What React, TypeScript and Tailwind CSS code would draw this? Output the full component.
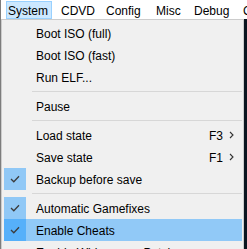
import React from 'react';

type Item =
    | { kind: 'sep' }
    | { kind: 'item'; label: string; shortcut?: string; sub?: boolean; checked?: boolean; hover?: boolean };

const items: Item[] = [
    { kind: 'item', label: 'Boot ISO (full)' },
    { kind: 'item', label: 'Boot ISO (fast)' },
    { kind: 'item', label: 'Run ELF...' },
    { kind: 'sep' },
    { kind: 'item', label: 'Pause' },
    { kind: 'sep' },
    { kind: 'item', label: 'Load state', shortcut: 'F3', sub: true },
    { kind: 'item', label: 'Save state', shortcut: 'F1', sub: true },
    { kind: 'item', label: 'Backup before save', checked: true },
    { kind: 'sep' },
    { kind: 'item', label: 'Automatic Gamefixes', checked: true },
    { kind: 'item', label: 'Enable Cheats', checked: true, hover: true },
    { kind: 'item', label: 'Enable Widescreen Patches' },
];

const menus = [
    { label: 'System', w: 'w-[53px]' },
    { label: 'CDVD', w: 'w-[45px]' },
    { label: 'Config', w: 'w-[50px]' },
    { label: 'Misc', w: 'w-[38px]' },
    { label: 'Debug', w: 'w-[49px]' },
    { label: 'Capture', w: 'w-[60px]' },
];

const Check = () => (
    <svg width="10" height="8" viewBox="0 0 10 8" fill="none">
        <path d="M1 4 L3.8 6.8 L9 1.2" stroke="#3c3c3c" strokeWidth="1.3" />
    </svg>
);

const Chevron = () => (
    <svg width="5" height="8" viewBox="0 0 5 8" fill="none">
        <path d="M1 1 L4 4 L1 7" stroke="#333" strokeWidth="1.1" />
    </svg>
);

export default function App() {
    return (
        <div className="w-[247px] h-[249px] overflow-hidden flex bg-[#0b1520] font-['Segoe_UI','Liberation_Sans',sans-serif] text-[12px] text-black">
            <div className="w-px shrink-0 bg-[#7d7d7d]" />
            <div className="flex-1 flex flex-col min-w-0">
                {/* menu bar */}
                <div className="h-[19px] shrink-0 bg-white flex pl-[5px] overflow-hidden">
                    {menus.map((m, i) => (
                        <div key={m.label} className={`${m.w} shrink-0 h-[19px] flex`}>
                            {i === 0 ? (
                                <div className="mt-[1px] w-[46px] h-[18px] bg-[#cce8ff] border border-[#99d1ff] flex items-center pl-[1px] pt-[2px] leading-none">
                                    {m.label}
                                </div>
                            ) : (
                                <div className="mt-[1px] h-[18px] flex items-center pl-[2px] pt-[2px] leading-none">{m.label}</div>
                            )}
                        </div>
                    ))}
                </div>

                <div className="flex flex-1 min-h-0">
                    <div className="w-[243px] shrink-0 bg-[#f0f0f0] border border-[#cccccc] border-b-0 pt-[2px] pl-[2px] pr-[1px]">
                        {items.map((it, i) =>
                            it.kind === 'sep' ? (
                                <div key={i} className="h-[7px] pl-[28px] flex items-center">
                                    <div className="h-px w-full bg-[#d7d7d7]" />
                                </div>
                            ) : (
                                <div key={i} className={`h-[22px] flex items-center ${it.hover ? 'bg-[#91c9f7]' : ''}`}>
                                    <div
                                        className={`w-[22px] h-[22px] shrink-0 flex items-center justify-center ${
                                            it.checked ? (it.hover ? 'bg-[#56b0fa]' : 'bg-[#90c8f6]') : ''
                                        }`}
                                    >
                                        {it.checked && <Check />}
                                    </div>
                                    <div className="pl-[10px] pt-[2px] flex-1 leading-none whitespace-nowrap">{it.label}</div>
                                    {it.shortcut && <div className="pt-[2px] leading-none">{it.shortcut}</div>}
                                    {it.sub && (
                                        <div className="w-[5px] ml-[6px] mr-[8px] flex items-center">
                                            <Chevron />
                                        </div>
                                    )}
                                </div>
                            )
                        )}
                    </div>
                </div>
            </div>
        </div>
    );
}
